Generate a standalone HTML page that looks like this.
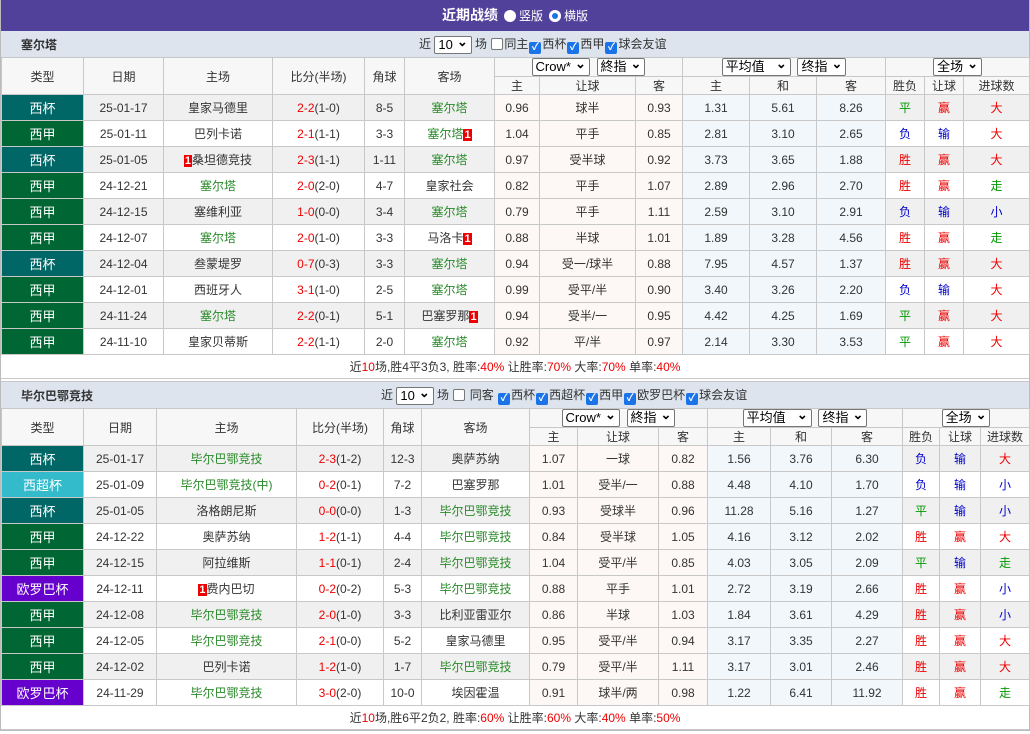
<!DOCTYPE html>
<html><head><meta charset="utf-8">
<style>
*{box-sizing:border-box;margin:0;padding:0}
body{width:1030px;height:734px;background:#fff;font-family:"Liberation Sans","Noto Sans CJK SC",sans-serif;font-size:12px;color:#333;overflow:hidden}
.wrap{border:1px solid #bbb;border-top:0;width:1030px;}
.title{height:31px;background:#52419a;color:#fff;text-align:center;font-size:14px;font-weight:bold;line-height:31px}
.title .r{display:inline-block;width:12px;height:12px;border-radius:50%;background:#fff;vertical-align:-2px;margin:0 3px 0 6px}
.title .r.on{box-shadow:inset 0 0 0 3px #fff,inset 0 0 0 6px #1a73e8}
.title span{font-weight:normal;font-size:12px}
.bar{height:26px;background:#dde4ee;position:relative;line-height:26px}
.bar .n{position:absolute;left:20px;top:1px;font-weight:bold;font-size:12px}
.bar .f{position:absolute;top:0;white-space:nowrap}
.sel{display:inline-block;border:1px solid #767676;background:#fff;height:18px;line-height:16px;padding:0 3px;border-radius:2px;vertical-align:middle;font-size:13px;color:#000}
.sel:after{content:"⌄";font-weight:bold;margin-left:4px;position:relative;top:-3px}
.cb{display:inline-block;width:12px;height:12px;border:1px solid #777;border-radius:2px;background:#fff;vertical-align:-2px;margin:0 1px}
.cb.on{background:#1a73e8;border-color:#1a73e8;color:#fff;font-size:10px;line-height:10px;text-align:center;font-weight:bold}
table{border-collapse:collapse;table-layout:fixed;width:1028px}
td,th{border:1px solid #c8c8c8;text-align:center;font-weight:normal;white-space:nowrap;overflow:hidden}
th{background:#f7f7f7;height:18px;font-size:12px}
tr.d td{height:26px}
tr.d:nth-child(odd) td{background:#f0f0f0}
tr.d td.t{color:#fff;font-size:13px}
td.xb{background:#006666!important}td.xj{background:#006633!important}td.xc{background:#33bbcc!important}td.oc{background:#6600cc!important}
tr.d td.o{background:#fdf8f5!important}tr.d td.a{background:#f1f7fb!important}
.g{color:#2a8a2a}.r{color:#e00}.b{color:#0000cc}.gr{color:#009900}
.s{color:#e00}
.rk{background:#e00;color:#fff;font-size:11px;padding:0 1px;font-weight:bold}
.sum{height:24px;line-height:24px;text-align:center;padding-left:0;border-bottom:1px solid #c8c8c8}
.sum i{font-style:normal;color:#e00}
</style></head><body><div class="wrap">
<div class="title">近期战绩<span class="r"></span><span>竖版</span><span class="r on"></span><span>横版</span></div>
<div class="bar"><span class="n">塞尔塔</span><span class="f" style="left:418px">近 <span class="sel">10</span> 场 <span class="cb"></span>同主<span class="cb on">✓</span>西杯<span class="cb on">✓</span>西甲<span class="cb on">✓</span>球会友谊</span></div>
<table>
<colgroup><col style="width:82px"><col style="width:80px"><col style="width:109px"><col style="width:92px"><col style="width:40px"><col style="width:90px"><col style="width:45px"><col style="width:96px"><col style="width:47px"><col style="width:67px"><col style="width:67px"><col style="width:69px"><col style="width:39px"><col style="width:39px"><col style="width:66px"></colgroup>
<tr><th rowspan="2">类型</th><th rowspan="2">日期</th><th rowspan="2">主场</th><th rowspan="2">比分(半场)</th><th rowspan="2">角球</th><th rowspan="2">客场</th><th colspan="3"><span class="sel">Crow*</span> &nbsp;<span class="sel">終指</span></th><th colspan="3"><span class="sel">平均值 &nbsp;</span> &nbsp;<span class="sel">终指</span></th><th colspan="3"><span class="sel">全场</span></th></tr>
<tr><th>主</th><th>让球</th><th>客</th><th>主</th><th>和</th><th>客</th><th>胜负</th><th>让球</th><th>进球数</th></tr>
<tr class="d"><td class="t xb">西杯</td><td>25-01-17</td><td>皇家马德里</td><td><span class="s">2-2</span>(1-0)</td><td>8-5</td><td class="g">塞尔塔</td><td class="o">0.96</td><td class="o">球半</td><td class="o">0.93</td><td class="a">1.31</td><td class="a">5.61</td><td class="a">8.26</td><td class="gr">平</td><td class="r">赢</td><td class="r">大</td></tr>
<tr class="d"><td class="t xj">西甲</td><td>25-01-11</td><td>巴列卡诺</td><td><span class="s">2-1</span>(1-1)</td><td>3-3</td><td class="g">塞尔塔<span class="rk">1</span></td><td class="o">1.04</td><td class="o">平手</td><td class="o">0.85</td><td class="a">2.81</td><td class="a">3.10</td><td class="a">2.65</td><td class="b">负</td><td class="b">输</td><td class="r">大</td></tr>
<tr class="d"><td class="t xb">西杯</td><td>25-01-05</td><td><span class="rk">1</span>桑坦德竞技</td><td><span class="s">2-3</span>(1-1)</td><td>1-11</td><td class="g">塞尔塔</td><td class="o">0.97</td><td class="o">受半球</td><td class="o">0.92</td><td class="a">3.73</td><td class="a">3.65</td><td class="a">1.88</td><td class="r">胜</td><td class="r">赢</td><td class="r">大</td></tr>
<tr class="d"><td class="t xj">西甲</td><td>24-12-21</td><td class="g">塞尔塔</td><td><span class="s">2-0</span>(2-0)</td><td>4-7</td><td>皇家社会</td><td class="o">0.82</td><td class="o">平手</td><td class="o">1.07</td><td class="a">2.89</td><td class="a">2.96</td><td class="a">2.70</td><td class="r">胜</td><td class="r">赢</td><td class="gr">走</td></tr>
<tr class="d"><td class="t xj">西甲</td><td>24-12-15</td><td>塞维利亚</td><td><span class="s">1-0</span>(0-0)</td><td>3-4</td><td class="g">塞尔塔</td><td class="o">0.79</td><td class="o">平手</td><td class="o">1.11</td><td class="a">2.59</td><td class="a">3.10</td><td class="a">2.91</td><td class="b">负</td><td class="b">输</td><td class="b">小</td></tr>
<tr class="d"><td class="t xj">西甲</td><td>24-12-07</td><td class="g">塞尔塔</td><td><span class="s">2-0</span>(1-0)</td><td>3-3</td><td>马洛卡<span class="rk">1</span></td><td class="o">0.88</td><td class="o">半球</td><td class="o">1.01</td><td class="a">1.89</td><td class="a">3.28</td><td class="a">4.56</td><td class="r">胜</td><td class="r">赢</td><td class="gr">走</td></tr>
<tr class="d"><td class="t xb">西杯</td><td>24-12-04</td><td>叁蒙堤罗</td><td><span class="s">0-7</span>(0-3)</td><td>3-3</td><td class="g">塞尔塔</td><td class="o">0.94</td><td class="o">受一/球半</td><td class="o">0.88</td><td class="a">7.95</td><td class="a">4.57</td><td class="a">1.37</td><td class="r">胜</td><td class="r">赢</td><td class="r">大</td></tr>
<tr class="d"><td class="t xj">西甲</td><td>24-12-01</td><td>西班牙人</td><td><span class="s">3-1</span>(1-0)</td><td>2-5</td><td class="g">塞尔塔</td><td class="o">0.99</td><td class="o">受平/半</td><td class="o">0.90</td><td class="a">3.40</td><td class="a">3.26</td><td class="a">2.20</td><td class="b">负</td><td class="b">输</td><td class="r">大</td></tr>
<tr class="d"><td class="t xj">西甲</td><td>24-11-24</td><td class="g">塞尔塔</td><td><span class="s">2-2</span>(0-1)</td><td>5-1</td><td>巴塞罗那<span class="rk">1</span></td><td class="o">0.94</td><td class="o">受半/一</td><td class="o">0.95</td><td class="a">4.42</td><td class="a">4.25</td><td class="a">1.69</td><td class="gr">平</td><td class="r">赢</td><td class="r">大</td></tr>
<tr class="d"><td class="t xj">西甲</td><td>24-11-10</td><td>皇家贝蒂斯</td><td><span class="s">2-2</span>(1-1)</td><td>2-0</td><td class="g">塞尔塔</td><td class="o">0.92</td><td class="o">平/半</td><td class="o">0.97</td><td class="a">2.14</td><td class="a">3.30</td><td class="a">3.53</td><td class="gr">平</td><td class="r">赢</td><td class="r">大</td></tr>
</table>
<div class="sum">近<i>10</i>场,胜4平3负3, 胜率:<i>40%</i> 让胜率:<i>70%</i> 大率:<i>70%</i> 单率:<i>40%</i></div>
<div style="height:3px;border-bottom:1px solid #c8c8c8"></div>
<div class="bar"><span class="n">毕尔巴鄂竞技</span><span class="f" style="left:380px">近 <span class="sel">10</span> 场 <span class="cb"></span> 同客 <span class="cb on">✓</span>西杯<span class="cb on">✓</span>西超杯<span class="cb on">✓</span>西甲<span class="cb on">✓</span>欧罗巴杯<span class="cb on">✓</span>球会友谊</span></div>
<table>
<colgroup><col style="width:82px"><col style="width:73px"><col style="width:140px"><col style="width:87px"><col style="width:38px"><col style="width:108px"><col style="width:48px"><col style="width:81px"><col style="width:49px"><col style="width:63px"><col style="width:61px"><col style="width:71px"><col style="width:37px"><col style="width:41px"><col style="width:49px"></colgroup>
<tr><th rowspan="2">类型</th><th rowspan="2">日期</th><th rowspan="2">主场</th><th rowspan="2">比分(半场)</th><th rowspan="2">角球</th><th rowspan="2">客场</th><th colspan="3"><span class="sel">Crow*</span> &nbsp;<span class="sel">終指</span></th><th colspan="3"><span class="sel">平均值 &nbsp;</span> &nbsp;<span class="sel">终指</span></th><th colspan="3"><span class="sel">全场</span></th></tr>
<tr><th>主</th><th>让球</th><th>客</th><th>主</th><th>和</th><th>客</th><th>胜负</th><th>让球</th><th>进球数</th></tr>
<tr class="d"><td class="t xb">西杯</td><td>25-01-17</td><td class="g">毕尔巴鄂竞技</td><td><span class="s">2-3</span>(1-2)</td><td>12-3</td><td>奥萨苏纳</td><td class="o">1.07</td><td class="o">一球</td><td class="o">0.82</td><td class="a">1.56</td><td class="a">3.76</td><td class="a">6.30</td><td class="b">负</td><td class="b">输</td><td class="r">大</td></tr>
<tr class="d"><td class="t xc">西超杯</td><td>25-01-09</td><td class="g">毕尔巴鄂竞技(中)</td><td><span class="s">0-2</span>(0-1)</td><td>7-2</td><td>巴塞罗那</td><td class="o">1.01</td><td class="o">受半/一</td><td class="o">0.88</td><td class="a">4.48</td><td class="a">4.10</td><td class="a">1.70</td><td class="b">负</td><td class="b">输</td><td class="b">小</td></tr>
<tr class="d"><td class="t xb">西杯</td><td>25-01-05</td><td>洛格朗尼斯</td><td><span class="s">0-0</span>(0-0)</td><td>1-3</td><td class="g">毕尔巴鄂竞技</td><td class="o">0.93</td><td class="o">受球半</td><td class="o">0.96</td><td class="a">11.28</td><td class="a">5.16</td><td class="a">1.27</td><td class="gr">平</td><td class="b">输</td><td class="b">小</td></tr>
<tr class="d"><td class="t xj">西甲</td><td>24-12-22</td><td>奥萨苏纳</td><td><span class="s">1-2</span>(1-1)</td><td>4-4</td><td class="g">毕尔巴鄂竞技</td><td class="o">0.84</td><td class="o">受半球</td><td class="o">1.05</td><td class="a">4.16</td><td class="a">3.12</td><td class="a">2.02</td><td class="r">胜</td><td class="r">赢</td><td class="r">大</td></tr>
<tr class="d"><td class="t xj">西甲</td><td>24-12-15</td><td>阿拉维斯</td><td><span class="s">1-1</span>(0-1)</td><td>2-4</td><td class="g">毕尔巴鄂竞技</td><td class="o">1.04</td><td class="o">受平/半</td><td class="o">0.85</td><td class="a">4.03</td><td class="a">3.05</td><td class="a">2.09</td><td class="gr">平</td><td class="b">输</td><td class="gr">走</td></tr>
<tr class="d"><td class="t oc">欧罗巴杯</td><td>24-12-11</td><td><span class="rk">1</span>费内巴切</td><td><span class="s">0-2</span>(0-2)</td><td>5-3</td><td class="g">毕尔巴鄂竞技</td><td class="o">0.88</td><td class="o">平手</td><td class="o">1.01</td><td class="a">2.72</td><td class="a">3.19</td><td class="a">2.66</td><td class="r">胜</td><td class="r">赢</td><td class="b">小</td></tr>
<tr class="d"><td class="t xj">西甲</td><td>24-12-08</td><td class="g">毕尔巴鄂竞技</td><td><span class="s">2-0</span>(1-0)</td><td>3-3</td><td>比利亚雷亚尔</td><td class="o">0.86</td><td class="o">半球</td><td class="o">1.03</td><td class="a">1.84</td><td class="a">3.61</td><td class="a">4.29</td><td class="r">胜</td><td class="r">赢</td><td class="b">小</td></tr>
<tr class="d"><td class="t xj">西甲</td><td>24-12-05</td><td class="g">毕尔巴鄂竞技</td><td><span class="s">2-1</span>(0-0)</td><td>5-2</td><td>皇家马德里</td><td class="o">0.95</td><td class="o">受平/半</td><td class="o">0.94</td><td class="a">3.17</td><td class="a">3.35</td><td class="a">2.27</td><td class="r">胜</td><td class="r">赢</td><td class="r">大</td></tr>
<tr class="d"><td class="t xj">西甲</td><td>24-12-02</td><td>巴列卡诺</td><td><span class="s">1-2</span>(1-0)</td><td>1-7</td><td class="g">毕尔巴鄂竞技</td><td class="o">0.79</td><td class="o">受平/半</td><td class="o">1.11</td><td class="a">3.17</td><td class="a">3.01</td><td class="a">2.46</td><td class="r">胜</td><td class="r">赢</td><td class="r">大</td></tr>
<tr class="d"><td class="t oc">欧罗巴杯</td><td>24-11-29</td><td class="g">毕尔巴鄂竞技</td><td><span class="s">3-0</span>(2-0)</td><td>10-0</td><td>埃因霍温</td><td class="o">0.91</td><td class="o">球半/两</td><td class="o">0.98</td><td class="a">1.22</td><td class="a">6.41</td><td class="a">11.92</td><td class="r">胜</td><td class="r">赢</td><td class="gr">走</td></tr>
</table>
<div class="sum">近<i>10</i>场,胜6平2负2, 胜率:<i>60%</i> 让胜率:<i>60%</i> 大率:<i>40%</i> 单率:<i>50%</i></div>
</div></body></html>
